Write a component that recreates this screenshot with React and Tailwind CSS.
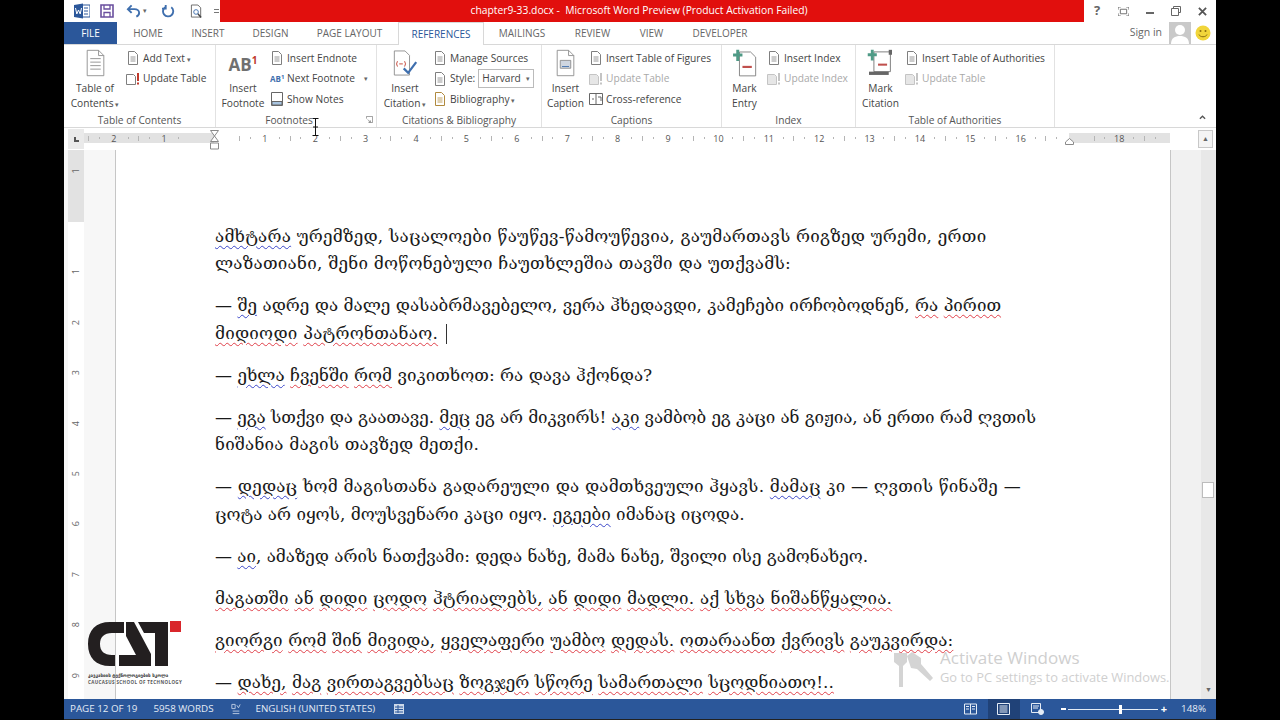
import React from "react";

const R = ({ children }) => <span className="underline decoration-wavy decoration-[#e0404a] decoration-1 underline-offset-[3px]">{children}</span>;
const B = ({ children }) => <span className="underline decoration-wavy decoration-[#3a46c8] decoration-1 underline-offset-[3px]">{children}</span>;

const Page = ({ cls = "text-[#7f7f7f]", children }) => (
  <svg viewBox="0 0 14 14" className={"w-[14px] h-[14px] shrink-0 " + cls} fill="none" stroke="currentColor" strokeWidth="1">
    <path d="M2.5 .5h6l3 3v10h-9z" />
    <path d="M4.5 6h5M4.5 8h5M4.5 10h5" strokeWidth=".8" />
    {children}
  </svg>
);
const UpdateIco = ({ cls = "text-[#7f7f7f]" }) => (
  <svg viewBox="0 0 14 14" className={"w-[14px] h-[14px] shrink-0 " + cls} fill="none" stroke="currentColor">
    <path d="M.5 2.5h7l2 2v8h-9z" />
    <path d="M12 1v8" stroke="#c0392b" strokeWidth="2" />
    <path d="M12 10.5v2" stroke="#c0392b" strokeWidth="2" />
  </svg>
);
const UpdateGray = () => (
  <svg viewBox="0 0 14 14" className="w-[14px] h-[14px] shrink-0" fill="#e6e6e6" stroke="#c4c4c4">
    <path d="M.5 2.5h7l2 2v8h-9z" />
    <path d="M12 1v8M12 10.5v2" strokeWidth="2" />
  </svg>
);
const Small = ({ icon, children, off, caret }) => (
  <div className={"flex items-center gap-[3px] h-[20.5px] whitespace-nowrap " + (off ? "text-[#a9a9a9]" : "")}>
    {icon}
    <span>{children}</span>
    {caret && <span className={"text-[7px] text-[#666] " + caret}>▾</span>}
  </div>
);
const Big = ({ w, icon, a, b, caret }) => (
  <div className={"flex flex-col items-center shrink-0 " + w}>
    <div className="h-[28px] mt-[1px] mb-[4px] flex items-center justify-center">{icon}</div>
    <div className="leading-[14.5px] text-center whitespace-nowrap">
      <div>{a}</div>
      <div>{b}{caret && <span className="text-[7px] text-[#666]"> ▾</span>}</div>
    </div>
  </div>
);
const Group = ({ w, label, children, launcher }) => (
  <div className={"relative flex flex-col shrink-0 h-full border-r border-[#e2e2e2] " + w}>
    <div className="flex flex-1 min-h-0 pt-[3px]">{children}</div>
    <div className={"h-[14px] leading-[14px] text-center text-[10.2px] text-[#555] " + (launcher ? "pr-[14px]" : "")}>{label}</div>
    {launcher && (
      <svg viewBox="0 0 8 8" className="absolute right-[3px] bottom-[4px] w-[7px] h-[7px]" fill="none" stroke="#777">
        <path d="M.5 3V.5H7.500V7.500H3M2 4l3 3M5 5v2H3" strokeWidth=".8" />
      </svg>
    )}
  </div>
);
const Col = ({ children }) => <div className="flex flex-col">{children}</div>;

const BigDoc = ({ children }) => (
  <svg viewBox="0 0 24 32" className="w-[21px] h-[28px]" fill="#fff" stroke="#8a8a8a">
    <path d="M2.500 1.500h13l6 6v23h-19z" />
    <path d="M15.500 1.500v6h6" fill="none" />
    {children}
  </svg>
);

const PlusMinusDoc = () => (
  <svg viewBox="0 0 28 34" className="w-[24px] h-[29px]" fill="none">
    <path d="M7.500 3.500h13l6 6v22h-19z" fill="#fff" stroke="#777" />
    <path d="M5.500 1v13M0 7h11" stroke="#4f9a86" strokeWidth="3.500" />
    <path d="M11 21h11" stroke="#c0504d" strokeWidth="2.500" />
  </svg>
);
const PlusMinusScroll = () => (
  <svg viewBox="0 0 32 34" className="w-[27px] h-[28px]" fill="none">
    <path d="M8 3.500h20v24H8z" fill="#fff" stroke="#666" />
    <path d="M2 27.500h24v4H2z" fill="#666" />
    <path d="M26 1h4v6h-4z" fill="#666" />
    <path d="M6 1v13M.500 7h11" stroke="#4f9a86" strokeWidth="3.500" />
    <path d="M13 19h11" stroke="#c0504d" strokeWidth="2.500" />
  </svg>
);

const Seg = ({ n }) => (
  <div className="w-[50.4px] shrink-0 flex items-center justify-between">
    <span className="w-px h-[5px] bg-[#b5b5b5]" />
    <span className="w-px h-[2px] bg-[#b5b5b5]" />
    <span className="w-2 flex justify-center text-[9px] text-[#555] leading-none">{n}</span>
    <span className="w-px h-[2px] bg-[#b5b5b5]" />
    <span className="w-0" />
  </div>
);

const Line = ({ t, children }) => <div className={"h-[27.500px] leading-[27.500px] whitespace-nowrap " + (t || "")}>{children}</div>;
const Para = ({ children }) => <div className="mb-[14.500px]">{children}</div>;

export default function App() {
  return (
    <div className="w-[1280px] h-[720px] bg-black flex justify-center overflow-hidden relative font-['Open_Sans',sans-serif]">
      <div className="w-[1152px] h-[720px] flex flex-col bg-white text-[#444] text-[10.2px]">
        {/* title bar */}
        <div className="h-[22px] flex shrink-0">
          <div className="w-[156px] flex items-center pl-[10px] gap-[10px]">
            <svg viewBox="0 0 16 16" className="w-[16px] h-[16px]">
              <path d="M8 2h8v12H8z" fill="#fff" stroke="#2b579a" />
              <path d="M10 5h4M10 8h4M10 11h4" stroke="#2b579a" />
              <path d="M0 2l9-1.500v15L0 14z" fill="#2b579a" />
              <path d="M1.500 5l1.300 6 1.700-4 1.700 4 1.300-6" fill="none" stroke="#fff" />
            </svg>
            <svg viewBox="0 0 14 14" className="w-[14px] h-[14px]" fill="none" stroke="#6a4f9e" strokeWidth="1.600">
              <path d="M1 1h12v12H1z" />
              <path d="M4 1v4h6V1M4 13V8.500h6V13" strokeWidth="1.300" />
            </svg>
            <div className="flex items-center gap-[2px] ml-[2px]">
              <svg viewBox="0 0 16 14" className="w-[15px] h-[14px]" fill="none" stroke="#3f6fae" strokeWidth="2">
                <path d="M6 1L2 5l4 4M2 5h7c3 0 5 2 5 4s-1 3-3 4" />
              </svg>
              <span className="text-[7px] text-[#666]">▾</span>
            </div>
            <svg viewBox="0 0 14 14" className="w-[13px] h-[14px] ml-[5px]" fill="none" stroke="#3f6fae" strokeWidth="2">
              <path d="M4 2.500A5.500 5.500 0 1 0 10 3M4 .500v4h-4" />
            </svg>
            <svg viewBox="0 0 14 15" className="w-[13px] h-[15px] ml-[5px]" fill="#fff" stroke="#666">
              <path d="M1.500 .500h7l3 3v10h-10z" />
              <circle cx="6.500" cy="8" r="2.500" stroke="#3f6fae" />
              <path d="M8.500 10l3.500 4" stroke="#444" strokeWidth="1.500" />
            </svg>
            <span className="flex flex-col gap-[2px] w-[5px] ml-[1px]">
              <span className="h-px bg-[#777]" />
              <span className="h-px bg-[#777]" />
            </span>
          </div>
          <div className="flex-1 bg-[#e10f0d] text-white text-[10.300px] flex items-center justify-center whitespace-pre pr-[26px]">chapter9-33.docx -  Microsoft Word Preview (Product Activation Failed)</div>
          <div className="w-[132px] flex items-center text-[#666]">
            <span className="w-[26.500px] text-center font-bold text-[13px]">?</span>
            <div className="w-[26.500px] flex justify-center">
              <svg viewBox="0 0 12 10" className="w-[11px] h-[9px]" fill="none" stroke="#666"><path d="M2.500 2.500h7v5h-7zM0 3V0h3M9 0h3v3M0 7v3h3M12 7v3H9" /></svg>
            </div>
            <div className="w-[26.500px] flex justify-center"><span className="w-[8px] h-[2px] bg-[#666] mt-[3px]" /></div>
            <div className="w-[26.500px] flex justify-center">
              <svg viewBox="0 0 10 10" className="w-[10px] h-[10px]" fill="none" stroke="#666"><path d="M2.500 2.500V.500h7v6h-2M.500 2.500h7v7h-7z" /></svg>
            </div>
            <div className="w-[26.500px] flex justify-center">
              <svg viewBox="0 0 10 10" className="w-[9px] h-[9px]" fill="none" stroke="#555" strokeWidth="2"><path d="M1 1l8 8M9 1l-8 8" /></svg>
            </div>
          </div>
        </div>
        {/* tabs */}
        <div className="h-[23px] shrink-0 flex items-stretch border-b border-[#d8d8d8] text-[10px] text-[#666]">
          <div className="w-[53px] bg-[#2b579a] text-white flex items-center justify-center">FILE</div>
          <div className="w-[62px] flex items-center justify-center">HOME</div>
          <div className="w-[58px] flex items-center justify-center">INSERT</div>
          <div className="w-[67px] flex items-center justify-center">DESIGN</div>
          <div className="w-[94px] pr-[3px] flex items-center justify-center">PAGE LAYOUT</div>
          <div className="w-[86px] flex items-center justify-center text-[#2b579a] bg-white border-x border-t border-[#d8d8d8] h-[23px]">REFERENCES</div>
          <div className="w-[76px] flex items-center justify-center">MAILINGS</div>
          <div className="w-[65px] flex items-center justify-center">REVIEW</div>
          <div className="w-[53px] flex items-center justify-center">VIEW</div>
          <div className="w-[84px] flex items-center justify-center">DEVELOPER</div>
          <div className="flex-1 flex items-center justify-end pr-[5px] text-[10.500px]">
            <span className="mr-[7px]">Sign in</span>
            <svg viewBox="0 0 22 22" className="w-[22px] h-[22px] mr-[4px]">
              <path d="M0 0h22v22H0z" fill="#c9c9c9" />
              <circle cx="11" cy="8" r="5" fill="#fff" />
              <path d="M2 22c0-6 4-8 9-8s9 2 9 8z" fill="#fff" />
            </svg>
            <svg viewBox="0 0 16 16" className="w-[16px] h-[16px]">
              <circle cx="8" cy="8" r="7.500" fill="#f1d53a" />
              <circle cx="5.500" cy="6" r="1" fill="#8a6d10" />
              <circle cx="10.500" cy="6" r="1" fill="#8a6d10" />
              <path d="M4 9.500c1 3 7 3 8 0" fill="none" stroke="#8a6d10" />
            </svg>
          </div>
        </div>
        {/* ribbon */}
        <div className="h-[83px] shrink-0 flex border-b border-[#d8d8d8] relative">
          <Group w="w-[152px]" label="Table of Contents">
            <Big w="w-[62px]" a="Table of" b="Contents" caret icon={<BigDoc><path d="M6 11h12M6 15h12M6 19h12M6 23h12" stroke="#8a8a8a" /></BigDoc>} />
            <Col>
              <Small icon={<Page />}>Add Text<span className="text-[7px] text-[#666]"> ▾</span></Small>
              <Small icon={<UpdateIco />}>Update Table</Small>
            </Col>
          </Group>
          <Group w="w-[161px]" label="Footnotes" launcher>
            <Big w="w-[54px]" a="Insert" b="Footnote" icon={
              <div className="flex items-start text-[#707070] font-bold text-[17px] leading-[20px] pt-[4px]">AB<span className="text-[10px] leading-[10px] text-[#c0392b] font-bold">1</span></div>
            } />
            <Col>
              <Small icon={<Page />}>Insert Endnote</Small>
              <Small caret="ml-[6px]" icon={<span className="w-[14px] text-[8px] font-bold text-[#3f6fae] shrink-0">AB<sup>1</sup></span>}>Next Footnote</Small>
              <Small icon={<svg viewBox="0 0 14 14" className="w-[14px] h-[14px] shrink-0" fill="none" stroke="#666"><path d="M1.500 .500h11v13h-11z" /><path d="M2 9.500h10v3.500H2z" fill="#a8c4e0" /></svg>}>Show Notes</Small>
            </Col>
          </Group>
          <Group w="w-[165px]" label="Citations & Bibliography">
            <Big w="w-[56px]" a="Insert" b="Citation" caret icon={
              <svg viewBox="0 0 28 30" className="w-[25px] h-[28px]" fill="none">
                <path d="M1.500 1.500h12l5 5v22h-17z" fill="#fff" stroke="#8a8a8a" />
                <path d="M5 13l-1 3 1 3M13 13l1 3-1 3M7 16h4" stroke="#c0392b" />
                <path d="M12 21l5 5 9-12" stroke="#3f6fae" strokeWidth="2.500" />
              </svg>
            } />
            <Col>
              <Small icon={<Page />}>Manage Sources</Small>
              <div className="flex items-center gap-[3px] h-[20.500px]">
                <Page /><span>Style:</span>
                <div className="w-[56px] h-[19px] border border-[#bbb] flex items-center justify-between px-[3px]"><span>Harvard</span><span className="text-[7px] text-[#666]">▾</span></div>
              </div>
              <Small icon={<Page cls="text-[#b08a3e]" />}>Bibliography<span className="text-[7px] text-[#666]"> ▾</span></Small>
            </Col>
          </Group>
          <Group w="w-[180px]" label="Captions">
            <Big w="w-[47px]" a="Insert" b="Caption" icon={<BigDoc><path d="M6 13h12v9H6z" fill="#cfd6e0" stroke="#8a8a8a" /><path d="M8 20h8" stroke="#3f6fae" /></BigDoc>} />
            <Col>
              <Small icon={<Page />}>Insert Table of Figures</Small>
              <Small off icon={<UpdateGray />}>Update Table</Small>
              <Small icon={<svg viewBox="0 0 14 14" className="w-[14px] h-[14px] shrink-0" fill="none" stroke="#666"><path d="M.500 1.500h13v11H.500zM7 1.500v11M3 7h2M9 5h3v4" /></svg>}>Cross-reference</Small>
            </Col>
          </Group>
          <Group w="w-[134px]" label="Index">
            <Big w="w-[45px]" a="Mark" b="Entry" icon={<PlusMinusDoc />} />
            <Col>
              <Small icon={<Page />}>Insert Index</Small>
              <Small off icon={<UpdateGray />}>Update Index</Small>
            </Col>
          </Group>
          <Group w="w-[199px]" label="Table of Authorities">
            <Big w="w-[49px]" a="Mark" b="Citation" icon={<PlusMinusScroll />} />
            <Col>
              <Small icon={<Page />}>Insert Table of Authorities</Small>
              <Small off icon={<UpdateGray />}>Update Table</Small>
            </Col>
          </Group>
          <svg viewBox="0 0 8 5" className="absolute right-[10px] bottom-[7px] w-[7px] h-[5px]" fill="none" stroke="#555" strokeWidth="1.500"><path d="M1 4l3-3 3 3" /></svg>
          <svg viewBox="0 0 9 18" className="absolute left-[247px] top-[73px] w-[9px] h-[18px] z-10" fill="none" stroke="#111"><path d="M4.500 1v16M1.500 .500h6M1.500 17.500h6M2 9h5" /></svg>
        </div>
        {/* ruler */}
        <div className="h-[22px] shrink-0 flex items-stretch pl-[4px] pr-[3px] bg-white relative">
          <div className="w-[16px] my-[1px] bg-[#eaeaea] flex items-center justify-center">
            <span className="w-[5px] h-[5px] border-l-2 border-b-2 border-[#555]" />
          </div>
          <div className="flex-1 flex items-start pt-[5px]">
            <div className="flex h-[10px] w-[130px] justify-end bg-[#e2e2e2] shrink-0 overflow-hidden">
              <Seg n="2" /><Seg n="1" /><span className="w-[25.200px] shrink-0" />
            </div>
            <div className="flex h-[10px] w-[855px] shrink-0 overflow-hidden">
              <span className="w-[25.200px] shrink-0" />
              {[1,2,3,4,5,6,7,8,9,10,11,12,13,14,15,16,""].map((n, i) => <Seg key={i} n={n} />)}
            </div>
            <div className="flex h-[10px] w-[101px] bg-[#e2e2e2] shrink-0 overflow-hidden">
              <span className="w-[24.500px] shrink-0" />
              <Seg n="18" /><Seg n="" />
            </div>
          </div>
          <div className="w-[15px] my-[2px] border border-[#c8c8c8] flex items-center justify-center bg-[#f4f4f4]">
            <span className="text-[7px] text-[#666]">▲</span>
          </div>
          <svg viewBox="0 0 9 20" className="absolute left-[146px] top-[2px] w-[9px] h-[20px]" fill="#fff" stroke="#8a8a8a"><path d="M.500 .500h8L4.500 6zM4.500 6l4 5.500h-8zM.500 13h8v6h-8z" /></svg>
          <svg viewBox="0 0 9 7" className="absolute left-[1001px] top-[10px] w-[9px] h-[7px]" fill="#fff" stroke="#8a8a8a"><path d="M4.500 .500l4 3.500v2.500h-8V4z" /></svg>
        </div>
        {/* doc area */}
        <div className="flex-1 min-h-0 flex relative">
          <div className="w-[51px] shrink-0 bg-[#f7f7f7] pl-[4px] flex">
            <div className="w-[16px] flex flex-col text-[9px] text-[#666] items-center bg-white">
              <div className="w-full h-[72px] shrink-0 bg-[#e2e2e2] flex justify-center pt-[14px]"><span className="-rotate-90 h-[14px]">1</span></div>
              <div className="h-[25px] shrink-0" />
              {[1,2,3,4,5,6,7,8,9].map((n) => (
                <div key={n} className="h-[50.400px] shrink-0 flex items-center justify-center"><span className="-rotate-90">{n}</span></div>
              ))}
            </div>
          </div>
          <div className="w-[1056px] shrink-0 bg-white border-x border-[#c6c6c6] overflow-hidden pl-[99px] pt-[72.500px] font-['DejaVu_Serif','DejaVu_Sans',serif] text-[17px] text-[#1a1a1a]">
            <Para>
              <Line t="tracking-[.21px]"><B>ამხტარა</B> ურემზედ, საცალოები წაუწევ-წამოუწევია, გაუმართავს რიგზედ ურემი, ერთი</Line>
              <Line t="tracking-[.23px]">ლაზათიანი, შენი მოწონებული ჩაუთხლეშია თავში და უთქვამს:</Line>
            </Para>
            <Para>
              <Line>— <B>შე</B> ადრე და მალე დასაბრმავებელო, ვერა ჰხედავდი, კამეჩები ირჩობოდნენ, <R>რა</R> <R>პირით</R></Line>
              <Line t="tracking-[.24px]"><R>მიდიოდი</R> <R>პატრონთანაო.</R> <span className="inline-block w-px h-[20px] bg-[#333] align-middle ml-[2px]" /></Line>
            </Para>
            <Para>
              <Line>— <B>ეხლა</B> <R>ჩვენში</R> <R>რომ</R> ვიკითხოთ: რა დავა ჰქონდა?</Line>
            </Para>
            <Para>
              <Line t="tracking-[-.1px]">— <B>ეგა</B> სთქვი და გაათავე. <B>მეც</B> ეგ არ მიკვირს! <B>აკი</B> ვამბობ ეგ კაცი ან გიჟია, ან ერთი რამ ღვთის</Line>
              <Line t="tracking-[.18px]">ნიშანია მაგის თავზედ მეთქი.</Line>
            </Para>
            <Para>
              <Line t="tracking-[.19px]">— <B>დედაც</B> ხომ მაგისთანა გადარეული და დამთხვეული ჰყავს. <B>მამაც</B> კი — ღვთის წინაშე —</Line>
              <Line>ცოტა არ იყოს, მოუსვენარი კაცი იყო. <B>ეგეები</B> იმანაც იცოდა.</Line>
            </Para>
            <Para>
              <Line t="tracking-[-.04px]">— <B>აი</B>, ამაზედ არის ნათქვამი: დედა ნახე, მამა ნახე, შვილი ისე გამონახეო.</Line>
            </Para>
            <Para>
              <Line t="tracking-[.16px]"><R>მაგათში</R> <R>ან</R> <R>დიდი</R> <R>ცოდო</R> <R>ჰტრიალებს,</R> <R>ან</R> <R>დიდი</R> <R>მადლი.</R> <R>აქ</R> <R>სხვა</R> <R>ნიშანწყალია.</R></Line>
            </Para>
            <Para>
              <Line t="tracking-[.1px]"><R>გიორგი</R> <R>რომ</R> <R>შინ</R> <R>მივიდა,</R> <R>ყველაფერი</R> <R>უამბო</R> <R>დედას.</R> <R>ოთარაანთ</R> <R>ქვრივს</R> <R>გაუკვირდა:</R></Line>
            </Para>
            <Para>
              <Line t="tracking-[.05px]">— <R>დახე,</R> <R>მაგ</R> <R>ვირთაგვებსაც</R> <R>ზოგჯერ</R> <R>სწორე</R> <R>სამართალი</R> <R>სცოდნიათო!..</R></Line>
            </Para>
          </div>
          <div className="w-[30px] shrink-0 bg-[#f1f1f1]" />
          <div className="w-[15px] shrink-0 bg-[#e8e8e8] relative flex items-end justify-center pb-[4px]">
            <div className="absolute left-[1px] top-[332px] w-[12px] h-[16px] bg-white border border-[#bcbcbc]" />
            <span className="text-[7px] text-[#666]">▼</span>
          </div>
        </div>
        {/* status bar */}
        <div className="h-[20px] shrink-0 bg-[#2b579a] text-[#e4ecf6] text-[9.800px] flex items-center pl-[6px]">
          <span>PAGE 12 OF 19</span>
          <span className="ml-[16px]">5958 WORDS</span>
          <svg viewBox="0 0 12 13" className="w-[10px] h-[12px] ml-[17px]" fill="none" stroke="#cdd9ea"><path d="M1 1h4v5H1zM7 2l2 3 2-4M2 9h8M2 12h8" /></svg>
          <span className="ml-[15px]">ENGLISH (UNITED STATES)</span>
          <svg viewBox="0 0 12 12" className="w-[12px] h-[12px] ml-[18px]" fill="#cdd9ea"><path d="M1 1h10v10H1z" /><path d="M2 4h8M2 6.500h8M2 9h8M5 2v8" stroke="#2b579a" /></svg>
          <div className="flex-1" />
          <svg viewBox="0 0 13 12" className="w-[13px] h-[12px] mr-[11px]" fill="none" stroke="#e4ecf6"><path d="M.500 1h12v10H.500zM6.500 1v10M2 3.500h3M2 6h3M8 3.500h3M8 6h3" /></svg>
          <div className="w-[32px] h-[20px] bg-[#204278] flex items-center justify-center mr-[11px]">
            <svg viewBox="0 0 13 12" className="w-[13px] h-[12px]" fill="none" stroke="#e4ecf6"><path d="M.500 .500h12v11H.500zM2.500 3h8M2.500 5h8M2.500 7h8M2.500 9h8" /></svg>
          </div>
          <svg viewBox="0 0 13 12" className="w-[13px] h-[12px] mr-[17px]" fill="none" stroke="#e4ecf6"><path d="M.500 .500h9v9h-9zM2 3h6M2 5h5" /><circle cx="10" cy="9" r="2.500" fill="#e4ecf6" /></svg>
          <span className="w-[5px] h-[2px] bg-white mr-[2px]" />
          <div className="w-[90px] h-[1px] bg-[#e4ecf6] relative mr-[3px]">
            <span className="absolute left-[51px] -top-[4px] w-[3px] h-[9px] bg-white" />
          </div>
          <span className="text-white font-bold text-[11px] mr-[14px]">+</span>
          <span className="mr-[10px]">148%</span>
        </div>
        <div className="h-px shrink-0 bg-[#222]" />
      </div>

      {/* video watermark logo */}
      <div className="absolute left-[88px] top-[620px] w-[96px]">
        <svg viewBox="0 0 94 48" className="w-[94px] h-[48px] block">
          <path d="M36 2H22C8 2 0 10 0 24s8 22 22 22h5V35h-3c-8 0-12-4-12-11s4-11 12-11h12z" fill="#231f20" />
          <path d="M38 2h8l17 32v12H31V35h17L38 16z" fill="#231f20" />
          <path d="M50 2h30v44H67V13H56z" fill="#231f20" />
          <path d="M82 1h11v11H82z" fill="#d9262b" />
        </svg>
        <div className="text-[4.500px] font-bold text-[#333] leading-[7px] whitespace-nowrap font-['DejaVu_Sans',sans-serif] mt-[4px]">კავკასიის ტექნოლოგიების სკოლა</div>
        <div className="text-[4.500px] font-bold text-[#555] leading-[6px] whitespace-nowrap tracking-[.4px]">CAUCASUS SCHOOL OF TECHNOLOGY</div>
      </div>

      {/* activation watermark */}
      <div className="absolute left-[892px] top-[648px] flex items-start gap-[6px] text-[#cfcfcf]">
        <svg viewBox="0 0 42 38" className="w-[42px] h-[38px] mt-[2px]" fill="#d4d4d4">
          <path d="M2 3h13v9l-4 4v21H7V16L2 12z" />
          <path d="M15 6l5-4 9 6v6l12 14-3 3-13-12-6-1z" />
        </svg>
        <div>
          <div className="text-[17px] leading-[19px] whitespace-nowrap">Activate Windows</div>
          <div className="text-[12.900px] leading-[21px] whitespace-nowrap">Go to PC settings to activate Windows.</div>
        </div>
      </div>
    </div>
  );
}
